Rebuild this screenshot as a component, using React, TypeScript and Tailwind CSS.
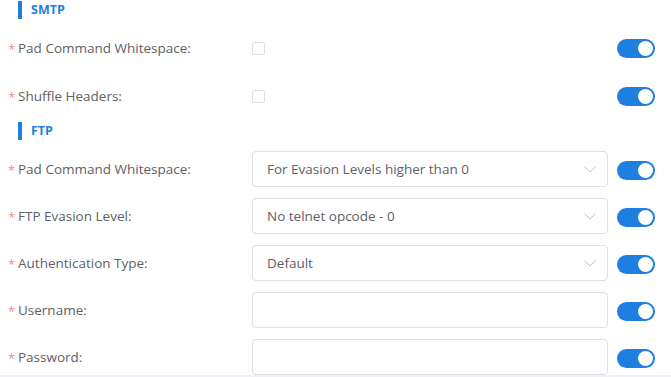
import React from "react";

const Toggle = ({ shift = false }: { shift?: boolean }) => (
  <div
    className={`ml-[9px] w-[38px] h-[19px] rounded-full bg-[#1e7fe0] relative shrink-0 ${
      shift ? "mt-[3px]" : ""
    }`}
  >
    <div className="absolute right-[2px] top-[2px] w-[15px] h-[15px] rounded-full bg-white" />
  </div>
);

const Label = ({ text }: { text: string }) => (
  <div className="w-[252px] shrink-0 flex items-center pl-[8px] text-[13.5px] text-[#5f6165]">
    <span className="w-[10px] text-[#f78a8a] text-[13px] leading-none mt-[3px]">*</span>
    <span>{text}</span>
  </div>
);

const Header = ({ text, className = "" }: { text: string; className?: string }) => (
  <div className={`flex items-center h-[18px] pl-[18px] ${className}`}>
    <div className="w-[4px] h-[18px] bg-[#1e7fe0]" />
    <span className="ml-[9px] text-[12.5px] font-bold text-[#1e7fe0]">{text}</span>
  </div>
);

const Chevron = () => (
  <svg width="12" height="7" viewBox="0 0 12 7" className="shrink-0">
    <path d="M0.5 0.8 L6 6 L11.5 0.8" fill="none" stroke="#c0c4cc" strokeWidth="1" />
  </svg>
);

const Select = ({ value }: { value: string }) => (
  <div className="w-[356px] h-[36px] shrink-0 border border-[#dcdfe6] rounded-[4px] flex items-center justify-between pl-[14px] pr-[11px] text-[13.5px] text-[#5f6165]">
    <span>{value}</span>
    <Chevron />
  </div>
);

const Input = () => (
  <div className="w-[356px] h-[36px] shrink-0 border border-[#dcdfe6] rounded-[4px]" />
);

const CheckRow = ({ label }: { label: string }) => (
  <div className="flex items-center h-[36px]">
    <Label text={label} />
    <div className="w-[356px] shrink-0 flex items-center">
      <div className="w-[13px] h-[13px] border border-[#dcdfe6] rounded-[2px] bg-white" />
    </div>
    <Toggle />
  </div>
);

const FieldRow = ({ label, children }: { label: string; children: React.ReactNode }) => (
  <div className="flex items-center h-[36px]">
    <Label text={label} />
    {children}
    <Toggle shift />
  </div>
);

export default function App() {
  return (
    <div
      className="w-[671px] h-[377px] bg-white relative overflow-hidden"
      style={{ fontFamily: '"Open Sans", "Liberation Sans", Arial, sans-serif' }}
    >
      <div className="flex flex-col">
        <Header text="SMTP" className="mt-[1px]" />
        <div className="flex flex-col gap-[12px] mt-[11px]">
          <CheckRow label="Pad Command Whitespace:" />
          <CheckRow label="Shuffle Headers:" />
        </div>
        <Header text="FTP" className="mt-[8px]" />
        <div className="flex flex-col gap-[11px] mt-[11px]">
          <FieldRow label="Pad Command Whitespace:">
            <Select value="For Evasion Levels higher than 0" />
          </FieldRow>
          <FieldRow label="FTP Evasion Level:">
            <Select value="No telnet opcode - 0" />
          </FieldRow>
          <FieldRow label="Authentication Type:">
            <Select value="Default" />
          </FieldRow>
          <FieldRow label="Username:">
            <Input />
          </FieldRow>
          <FieldRow label="Password:">
            <Input />
          </FieldRow>
        </div>
      </div>
      <div className="absolute left-0 right-0 bottom-0 h-[2px] bg-[#eef0f3]" />
    </div>
  );
}
